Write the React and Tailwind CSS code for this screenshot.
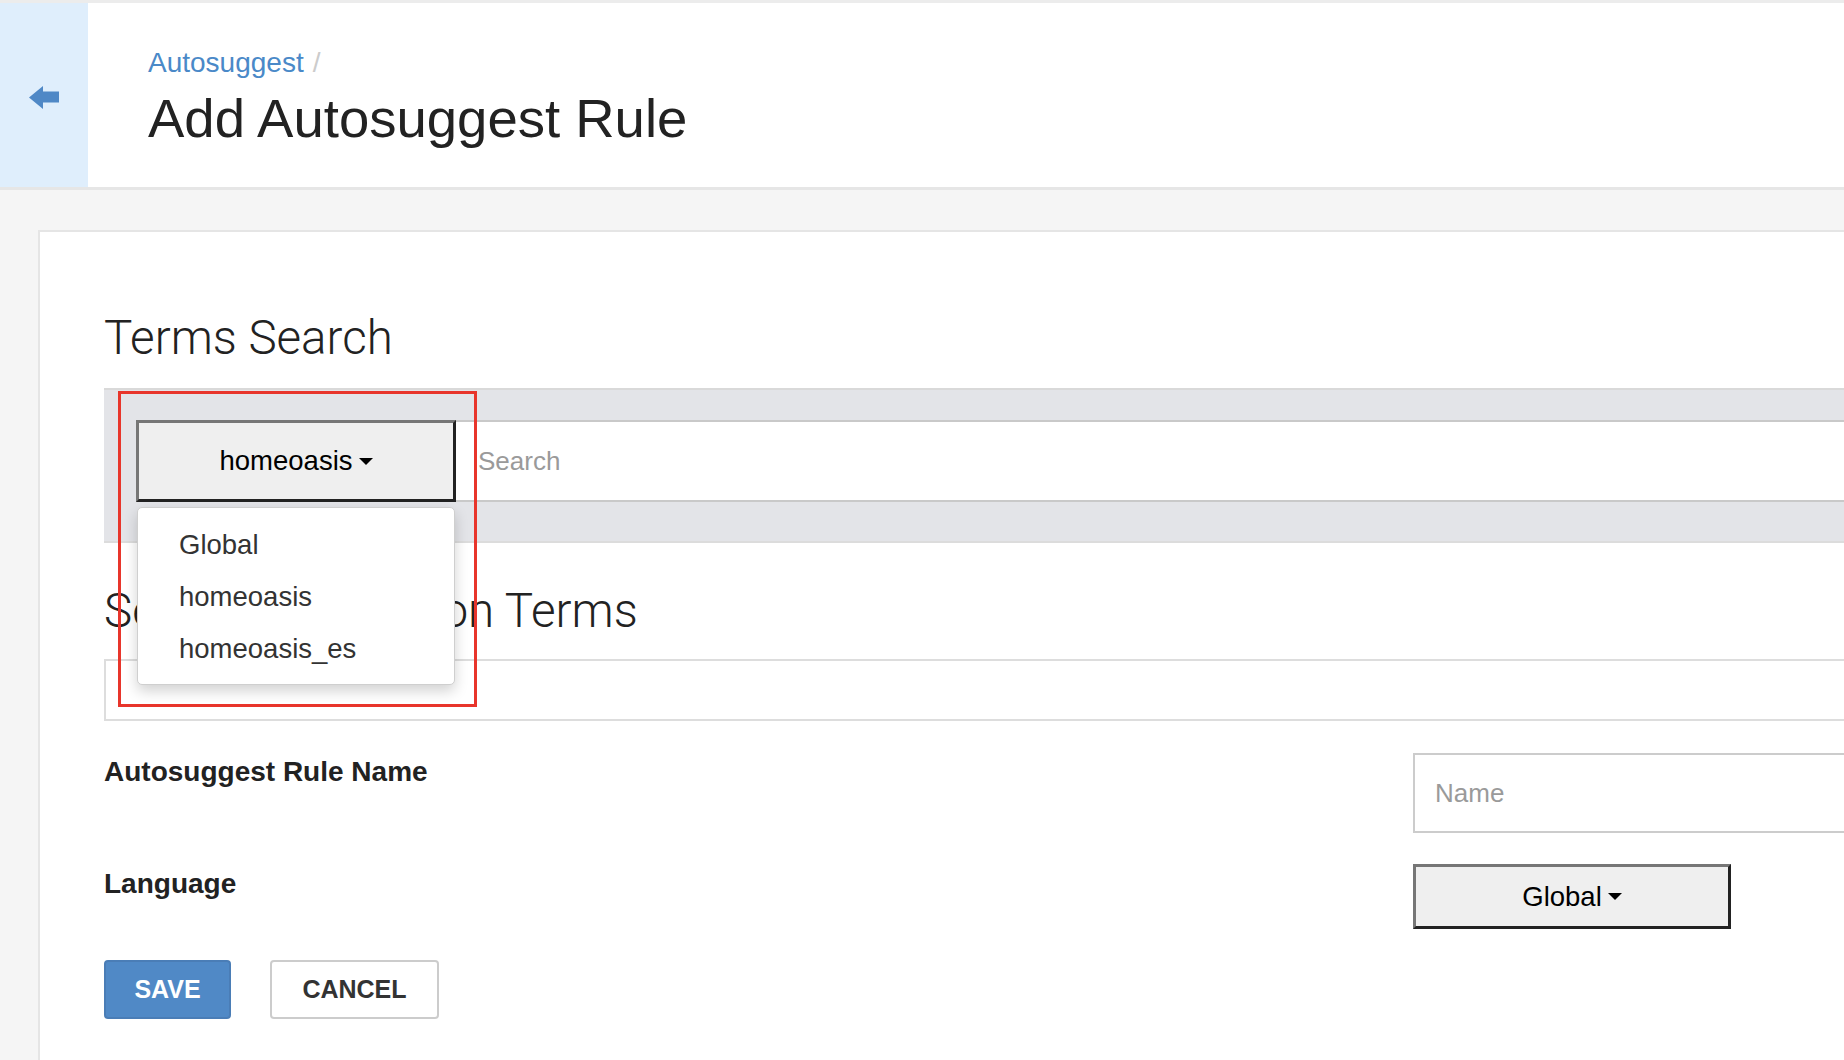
import React from 'react'

const sans = "font-['Liberation_Sans',Arial,sans-serif]"
const roboto = "font-['Roboto',sans-serif]"

function Caret() {
  return (
    <span className="ml-[6px] inline-block h-0 w-0 border-l-[7px] border-r-[7px] border-t-[7px] border-l-transparent border-r-transparent border-t-black" />
  )
}

function NativeSelect({ label, className = '' }) {
  return (
    <button
      className={`flex items-center justify-center bg-[#efefef] border-[3px] border-t-[#767676] border-l-[#767676] border-r-[#222] border-b-[#222] text-[27.5px] leading-none text-black ${className}`}
    >
      {label}
      <Caret />
    </button>
  )
}

export default function App() {
  const languages = ['Global', 'homeoasis', 'homeoasis_es']

  return (
    <div className={`relative h-[1060px] w-full overflow-hidden bg-[#f5f5f5] ${sans}`}>
      <div className="h-[3px] bg-[#ececec]" />

      {/* Header */}
      <header className="flex h-[187px] border-b-[3px] border-[#e6e6e6] bg-white">
        <div className="flex w-[88px] shrink-0 items-center justify-center bg-[#dfeefc] pt-[4px]">
          <svg width="30" height="23" viewBox="0 0 30 23">
            <polygon points="0,11.5 14,0 14,5.5 30,5.5 30,16.5 14,16.5 14,23" fill="#4f88c6" />
          </svg>
        </div>
        <div className="pl-[60px] pt-[46px]">
          <div className="flex items-center text-[28px] leading-none">
            <span className="text-[#4a89c8]">Autosuggest</span>
            <span className="ml-[9px] text-[#cccccc]">/</span>
          </div>
          <h1 className="mt-[15px] text-[54.5px] leading-none text-[#222]">Add Autosuggest Rule</h1>
        </div>
      </header>

      {/* Content */}
      <div className="pl-[38px] pt-[40px]">
        <div className="h-[900px] border-l-2 border-t-2 border-[#e5e5e5] bg-white pl-[64px]">
          <h2 className={`mt-[82.5px] text-[47.5px] font-light leading-none text-[#222] ${roboto}`}>Terms Search</h2>

          <div className="mt-[26px] flex border-y-2 border-t-[#d9d9d9] border-b-[#dcdcdc] bg-[#e3e4e8] pb-[39px] pl-[32px] pt-[30px]">
            <div className="relative">
              <NativeSelect label="homeoasis" className="h-[82px] w-[320px]" />
              <ul className="absolute left-[1px] top-[87px] z-10 w-[318px] rounded-[5px] border border-[#cfcfcf] bg-white pb-[9px] pt-[11px] shadow-[0_6px_14px_rgba(0,0,0,0.18)]">
                {languages.map(l => (
                  <li key={l} className="pl-[41px] text-[27.5px] leading-[52px] text-[#333]">{l}</li>
                ))}
              </ul>
            </div>
            <input
              placeholder="Search"
              className="h-[82px] flex-1 border-y-2 border-[#c9c9c9] bg-white pl-[22px] text-[26px] outline-none placeholder:text-[#9a9a9a]"
            />
          </div>

          <h2 className={`mt-[44.5px] text-[47.5px] font-light leading-none text-[#222] ${roboto}`}>Search Suggestion Terms</h2>
          <div className="mt-[24px] h-[62px] border-2 border-r-0 border-[#dddddd]" />

          {/* Rule name */}
          <div className="mt-[32px] flex items-start">
            <label className="w-[1309px] shrink-0 pt-[5px] text-[28px] font-bold leading-none text-[#222]">
              Autosuggest Rule Name
            </label>
            <input
              placeholder="Name"
              className="h-[80px] flex-1 border-2 border-r-0 border-[#cccccc] pl-[20px] text-[26px] outline-none placeholder:text-[#9a9a9a]"
            />
          </div>

          {/* Language */}
          <div className="mt-[31px] flex items-start">
            <label className="w-[1309px] shrink-0 pt-[6px] text-[28px] font-bold leading-none text-[#222]">
              Language
            </label>
            <NativeSelect label="Global" className="h-[65px] w-[318px]" />
          </div>

          <div className="mt-[31px] flex gap-[39px]">
            <button className="h-[59px] w-[127px] rounded-[4px] border-2 border-[#4a7db6] bg-[#5089c6] text-[25px] font-bold text-white">
              SAVE
            </button>
            <button className="h-[59px] w-[169px] rounded-[4px] border-2 border-[#cccccc] bg-white text-[25px] font-bold text-[#333]">
              CANCEL
            </button>
          </div>
        </div>
      </div>

      {/* Red annotation box */}
      <div className="pointer-events-none absolute left-[118px] top-[391px] z-20 h-[316px] w-[359px] border-[3px] border-[#e8352b]" />
    </div>
  )
}
